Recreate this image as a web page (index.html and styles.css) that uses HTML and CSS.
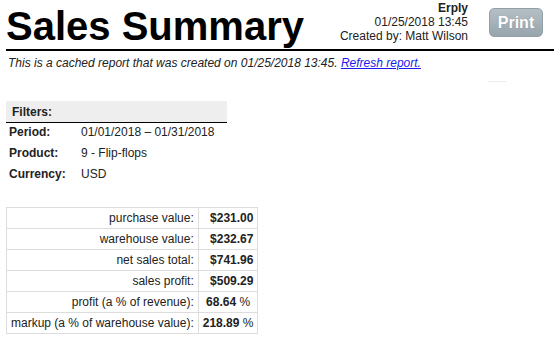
FILE: index.html
```html
<!DOCTYPE html>
<html>
<head>
<meta charset="utf-8">
<title>Sales Summary</title>
<link rel="stylesheet" href="styles.css">
</head>
<body>
<div class="page">
  <div class="header">
    <h1 class="title">Sales Summary</h1>
    <div class="info">
      <div class="company">Erply</div>
      <div>01/25/2018 13:45</div>
      <div>Created by: Matt Wilson</div>
    </div>
    <button class="print">Print</button>
  </div>
  <p class="cached">This is a cached report that was created on 01/25/2018 13:45. <a href="#" class="refresh">Refresh report.</a></p>
  <div class="tick"></div>
  <div class="filters">
    <div class="filters-head">Filters:</div>
    <div class="filter-row"><span class="flabel">Period:</span><span>01/01/2018 – 01/31/2018</span></div>
    <div class="filter-row"><span class="flabel">Product:</span><span>9 - Flip-flops</span></div>
    <div class="filter-row"><span class="flabel">Currency:</span><span>USD</span></div>
  </div>
  <table class="summary">
    <tr><td class="label">purchase value:</td><td class="value">$231.00</td></tr>
    <tr><td class="label">warehouse value:</td><td class="value">$232.67</td></tr>
    <tr><td class="label">net sales total:</td><td class="value">$741.96</td></tr>
    <tr><td class="label">sales profit:</td><td class="value">$509.29</td></tr>
    <tr><td class="label">profit (a % of revenue):</td><td class="value pct"><b>68.64</b> %</td></tr>
    <tr><td class="label">markup (a % of warehouse value):</td><td class="value pct"><b>218.89</b> %</td></tr>
  </table>
</div>
</body>
</html>
```
FILE: styles.css
```css
html, body {
  margin: 0;
  padding: 0;
  background: #fff;
}
body {
  font-family: "Liberation Sans", Arial, sans-serif;
  font-size: 12px;
  color: #222;
}
.page {
  padding-left: 6px;
}
.header {
  display: flex;
  align-items: flex-start;
  padding-bottom: 3px;
  border-bottom: 2px solid #000;
}
.title {
  flex: 1;
  margin: 6px 0 0 0;
  font-size: 40px;
  line-height: 40px;
  font-weight: bold;
  color: #000;
}
.info {
  margin-top: 1px;
  text-align: right;
  line-height: 14px;
  color: #222;
}
.company {
  font-weight: bold;
}
.print {
  margin: 8px 11px 0 21px;
  width: 54px;
  height: 29px;
  padding: 0;
  border: 1px solid #939fa7;
  border-radius: 5px;
  background: linear-gradient(#b4bec5, #98a5ad);
  color: #fff;
  font-family: "Liberation Sans", Arial, sans-serif;
  font-size: 16px;
  font-weight: bold;
  text-shadow: 0 0 1px rgba(80, 90, 100, 0.4);
}
.cached {
  margin: 5px 0 0 2px;
  line-height: 14px;
  font-style: italic;
}
.refresh {
  color: #1a1aee;
  text-decoration: underline;
}
.tick {
  margin: 11px 0 0 482px;
  width: 18px;
  height: 1px;
  background: #ececec;
}
.filters {
  margin-top: 19px;
  width: 221px;
}
.filters-head {
  padding: 4px 6px 3px;
  line-height: 14px;
  font-weight: bold;
  background: #eeeeee;
  border-bottom: 1px solid #000;
}
.filter-row {
  display: grid;
  grid-template-columns: 72px 1fr;
  padding: 2px 3px 5px;
  line-height: 14px;
  white-space: nowrap;
}
.flabel {
  font-weight: bold;
}
.summary {
  margin-top: 21px;
  border-collapse: collapse;
  border: 1px solid #dddddd;
}
.summary td {
  border: 1px solid #dddddd;
  padding: 3px 4px;
  line-height: 14px;
  white-space: nowrap;
}
.label {
  text-align: right;
}
.value {
  text-align: right;
  font-weight: bold;
}
.value.pct {
  text-align: center;
  font-weight: normal;
}
```
